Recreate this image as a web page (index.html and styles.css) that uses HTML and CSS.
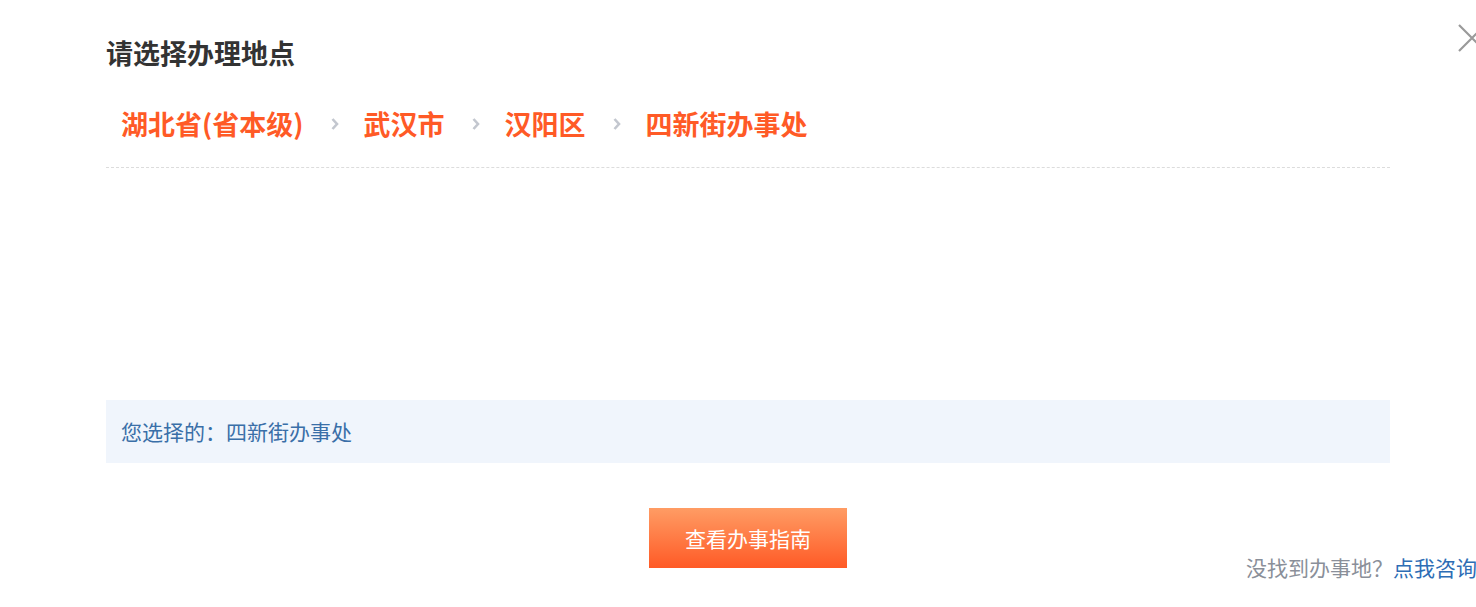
FILE: index.html
```html
<!DOCTYPE html>
<html lang="zh-CN">
<head>
<meta charset="utf-8">
<title>请选择办理地点</title>
<link rel="stylesheet" href="styles.css">
</head>
<body>
<div class="dialog">
  <button class="close" aria-label="关闭">
    <svg width="28" height="28" viewBox="0 0 28 28"><path d="M1 1 L27 27 M27 1 L1 27" stroke="#9a9a9a" stroke-width="2.2" fill="none"/></svg>
  </button>
  <h2 class="title">请选择办理地点</h2>
  <div class="crumbs">
    <span class="crumb">湖北省(省本级)</span>
    <span class="sep"><svg width="8" height="14" viewBox="0 0 8 14"><path d="M1.5 2 L6 7 L1.5 12" stroke="#c3c7cf" stroke-width="2.6" fill="none"/></svg></span>
    <span class="crumb">武汉市</span>
    <span class="sep"><svg width="8" height="14" viewBox="0 0 8 14"><path d="M1.5 2 L6 7 L1.5 12" stroke="#c3c7cf" stroke-width="2.6" fill="none"/></svg></span>
    <span class="crumb">汉阳区</span>
    <span class="sep"><svg width="8" height="14" viewBox="0 0 8 14"><path d="M1.5 2 L6 7 L1.5 12" stroke="#c3c7cf" stroke-width="2.6" fill="none"/></svg></span>
    <span class="crumb">四新街办事处</span>
  </div>
  <div class="options"></div>
  <div class="selected">您选择的：四新街办事处</div>
  <div class="actions">
    <button class="primary">查看办事指南</button>
    <div class="help">没找到办事地？<a href="#">点我咨询</a></div>
  </div>
</div>
</body>
</html>
```

FILE: styles.css
```css
html, body {
  margin: 0;
  padding: 0;
  background: #fff;
  overflow: hidden;
}
body {
  font-family: "Noto Sans CJK SC", "Noto Sans", sans-serif;
  width: 1476px;
  height: 607px;
}
.dialog {
  position: relative;
  padding: 0 86px 0 106px;
  height: 607px;
  box-sizing: border-box;
}
.close {
  position: absolute;
  top: 24px;
  left: 1458px;
  padding: 0;
  border: 0;
  background: none;
  width: 28px;
  height: 28px;
  cursor: pointer;
}
.close svg { display: block; }
.title {
  margin: 0;
  padding-top: 37px;
  font-size: 27px;
  line-height: 32px;
  font-weight: 700;
  color: #333;
}
.crumbs {
  display: flex;
  align-items: center;
  margin-top: 35px;
  padding: 0 15px 23px;
  height: 40px;
  border-bottom: 1px dashed #dcdcdc;
}
.crumb {
  font-size: 27px;
  line-height: 40px;
  font-weight: 700;
  color: #ff5a26;
}
.sep {
  display: flex;
  align-items: center;
  margin: 0 24px 0 28px;
}
.options {
  height: 232px;
}
.selected {
  height: 63px;
  background: #f0f5fc;
  padding-left: 15px;
  font-size: 21px;
  line-height: 63px;
  color: #3a6fa8;
}
.actions {
  position: relative;
  display: flex;
  justify-content: center;
  margin-top: 45px;
}
.primary {
  width: 198px;
  height: 60px;
  border: 0;
  padding: 0;
  background: linear-gradient(180deg, #ff9c64 0%, #ff5a26 100%);
  color: #fff;
  font-family: "Noto Sans CJK SC", "Noto Sans", sans-serif;
  font-size: 21px;
  cursor: pointer;
}
.help {
  position: absolute;
  left: 1140px;
  top: 44px;
  font-size: 21px;
  line-height: 30px;
  color: #8a8f99;
  white-space: nowrap;
}
.help a {
  color: #2d6db5;
  text-decoration: none;
}
```
